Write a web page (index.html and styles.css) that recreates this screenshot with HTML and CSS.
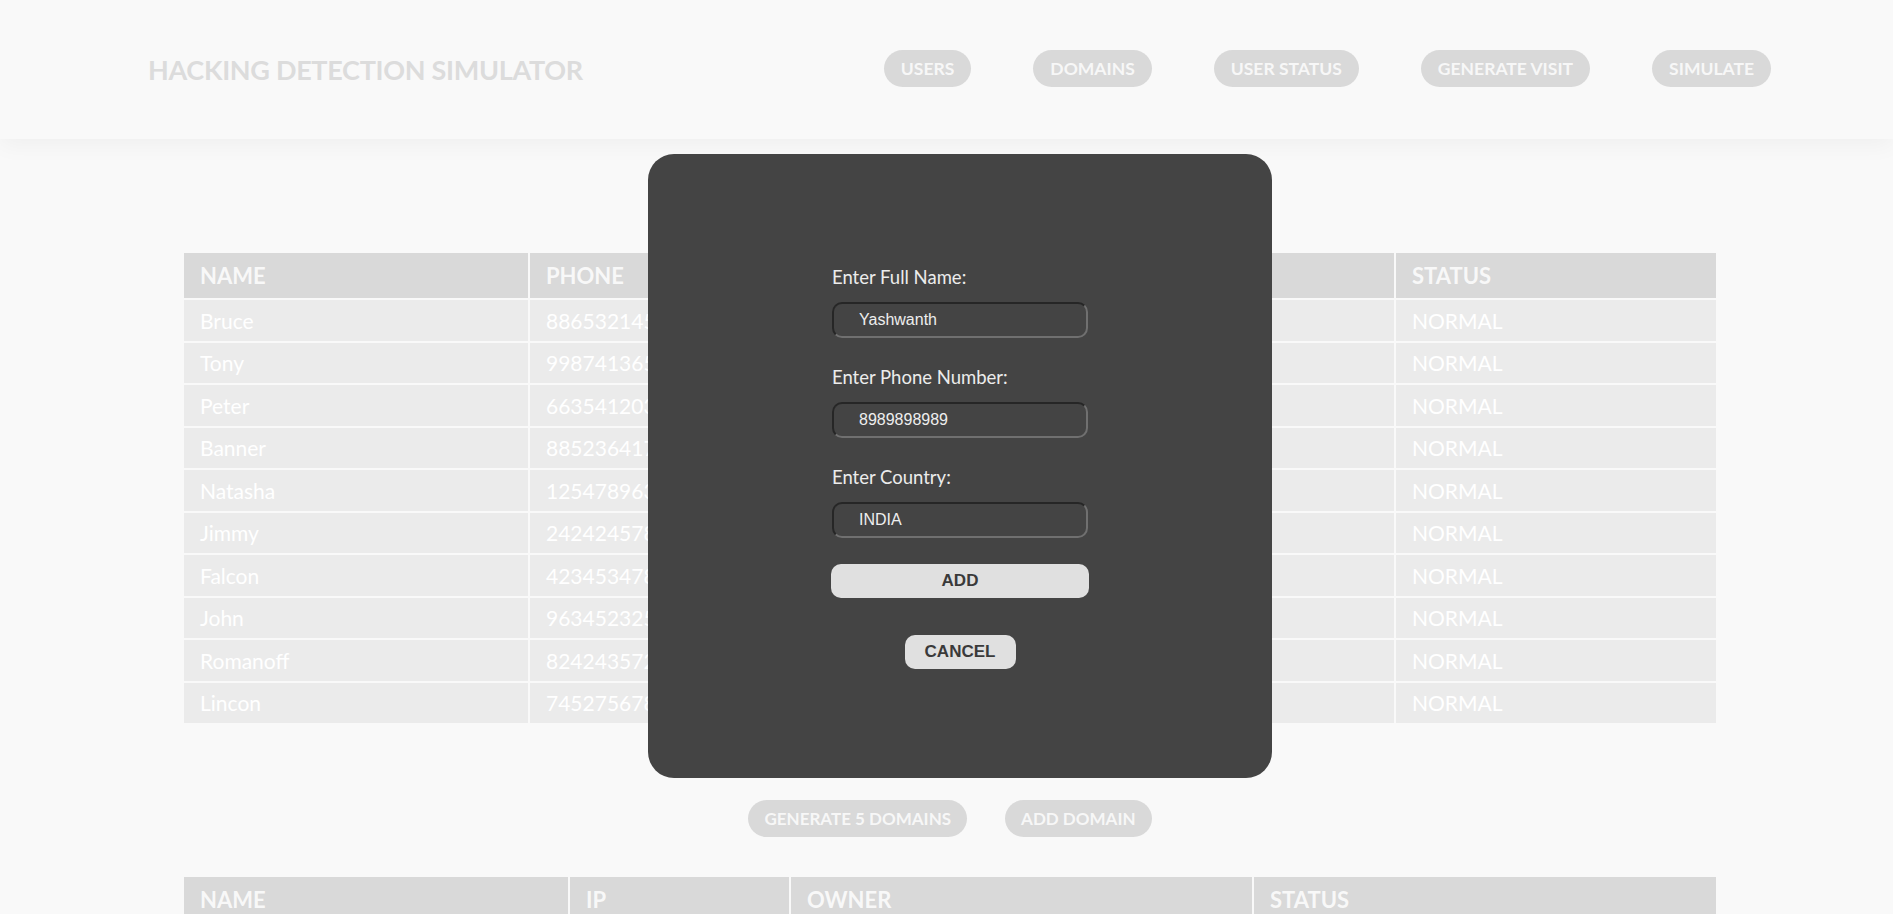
FILE: index.html
```html
<!DOCTYPE html>
<html lang="en">
<head>
<meta charset="utf-8">
<title>Hacking Detection Simulator</title>
<link rel="stylesheet" href="styles.css">
</head>
<body>
<header class="topbar">
  <div class="brand">HACKING DETECTION SIMULATOR</div>
  <nav class="nav">
    <span class="pill">USERS</span>
    <span class="pill">DOMAINS</span>
    <span class="pill">USER STATUS</span>
    <span class="pill">GENERATE VISIT</span>
    <span class="pill">SIMULATE</span>
  </nav>
</header>

<main class="content">
  <table class="grid users">
    <colgroup>
      <col class="c-name"><col class="c-phone"><col class="c-country"><col class="c-status">
    </colgroup>
    <thead>
      <tr><th>NAME</th><th>PHONE</th><th>COUNTRY</th><th>STATUS</th></tr>
    </thead>
    <tbody>
      <tr><td>Bruce</td><td>8865321459</td><td>USA</td><td>NORMAL</td></tr>
      <tr><td>Tony</td><td>9987413652</td><td>USA</td><td>NORMAL</td></tr>
      <tr><td>Peter</td><td>6635412037</td><td>USA</td><td>NORMAL</td></tr>
      <tr><td>Banner</td><td>8852364178</td><td>USA</td><td>NORMAL</td></tr>
      <tr><td>Natasha</td><td>1254789632</td><td>RUSSIA</td><td>NORMAL</td></tr>
      <tr><td>Jimmy</td><td>2424245786</td><td>UK</td><td>NORMAL</td></tr>
      <tr><td>Falcon</td><td>4234534786</td><td>USA</td><td>NORMAL</td></tr>
      <tr><td>John</td><td>9634523251</td><td>UK</td><td>NORMAL</td></tr>
      <tr><td>Romanoff</td><td>8242435721</td><td>RUSSIA</td><td>NORMAL</td></tr>
      <tr><td>Lincon</td><td>7452756781</td><td>USA</td><td>NORMAL</td></tr>
    </tbody>
  </table>

  <div class="actions">
    <span class="pill">GENERATE 5 DOMAINS</span>
    <span class="pill">ADD DOMAIN</span>
  </div>

  <table class="grid domains">
    <colgroup>
      <col class="d-name"><col class="d-ip"><col class="d-owner"><col class="d-status">
    </colgroup>
    <thead>
      <tr><th>NAME</th><th>IP</th><th>OWNER</th><th>STATUS</th></tr>
    </thead>
    <tbody>
      <tr><td>google.com</td><td>142.250.1.1</td><td>Bruce</td><td>SAFE</td></tr>
      <tr><td>amazon.com</td><td>205.251.242.103</td><td>Tony</td><td>SAFE</td></tr>
    </tbody>
  </table>
</main>

<div class="modal">
  <form class="modal-form">
    <label class="field-label" for="fullname">Enter Full Name:</label>
    <input class="field-input" id="fullname" type="text" value="Yashwanth">
    <label class="field-label" for="phone">Enter Phone Number:</label>
    <input class="field-input" id="phone" type="text" value="8989898989">
    <label class="field-label" for="country">Enter Country:</label>
    <input class="field-input" id="country" type="text" value="INDIA">
    <button class="btn-add" type="button">ADD</button>
    <button class="btn-cancel" type="button">CANCEL</button>
  </form>
</div>
</body>
</html>
```

FILE: styles.css
```css
* { box-sizing: border-box; }

html, body {
  margin: 0;
  padding: 0;
  background: #f9f9f9;
  font-family: Lato, "Noto Sans", sans-serif;
}

body { overflow: hidden; height: 914px; }

.topbar {
  height: 139px;
  display: flex;
  align-items: center;
  justify-content: space-between;
  padding: 0 122px 0 148px;
  background: #f9f9f9;
  box-shadow: 0 6px 22px rgba(0, 0, 0, 0.045);
  position: relative;
  z-index: 1;
}

.brand {
  font-size: 27px;
  font-weight: 700;
  color: #dcdcdc;
  letter-spacing: -0.3px;
}

.nav {
  display: flex;
  gap: 62px;
}

.pill {
  display: inline-flex;
  align-items: center;
  height: 37px;
  padding: 0 17px;
  border-radius: 19px;
  background: #d9d9d9;
  color: #f7f7f7;
  font-size: 17.5px;
  font-weight: 700;
  white-space: nowrap;
}

.nav .pill { margin-top: -2px; }

.actions .pill { font-size: 17px; padding: 0 16px; }

.content {
  padding: 112px 175px 0 182px;
}

.grid {
  width: 1536px;
  border-collapse: separate;
  border-spacing: 2px;
  table-layout: fixed;
  background: #f9f9f9;
}

.grid th,
.grid td {
  text-align: left;
  padding: 0 16px;
  color: #ffffff;
  white-space: nowrap;
  overflow: hidden;
}

.grid th {
  height: 45px;
  background: #d9d9d9;
  color: #f8f8f8;
  font-size: 22px;
  font-weight: 700;
}

.grid td {
  height: 40.5px;
  background: #ebebeb;
  font-size: 21px;
  font-weight: 400;
}

.c-name { width: 344px; }
.c-phone { width: 430px; }
.c-country { width: 432px; }
.c-status { width: 320px; }

.d-name { width: 384px; }
.d-ip { width: 219px; }
.d-owner { width: 461px; }
.d-status { width: 462px; }

.actions {
  display: flex;
  justify-content: center;
  gap: 38px;
  margin: 75px 0 38px;
}

.modal {
  position: absolute;
  left: 648px;
  top: 154px;
  width: 624px;
  height: 624px;
  background: #444444;
  border-radius: 26px;
  z-index: 5;
}

.modal-form {
  width: 256px;
  margin: 0 auto;
  padding-top: 111px;
  display: flex;
  flex-direction: column;
}

.field-label {
  display: block;
  height: 24px;
  line-height: 24px;
  font-size: 18.5px;
  color: #ececec;
  margin-bottom: 13px;
}

.field-input {
  display: block;
  width: 256px;
  height: 36px;
  margin: 0 0 27px;
  padding: 0 0 0 25px;
  border: 2px solid;
  border-color: #262626 #707070 #707070 #262626;
  border-radius: 10px;
  background: #444444;
  color: #eeeeee;
  font-family: "Liberation Sans", Arial, sans-serif;
  font-size: 16px;
  outline: none;
}

.modal-form .field-input:last-of-type { margin-bottom: 26px; }

.btn-add,
.btn-cancel {
  border: none;
  background: #e0e0e0;
  color: #3a3a3a;
  font-family: "Liberation Sans", Arial, sans-serif;
  font-size: 17px;
  font-weight: 700;
  height: 34px;
  border-radius: 10px;
  padding: 0;
  cursor: pointer;
}

.btn-add {
  width: 258px;
  margin-left: -1px;
}

.btn-cancel {
  align-self: center;
  width: 111px;
  margin-top: 37px;
}
```
